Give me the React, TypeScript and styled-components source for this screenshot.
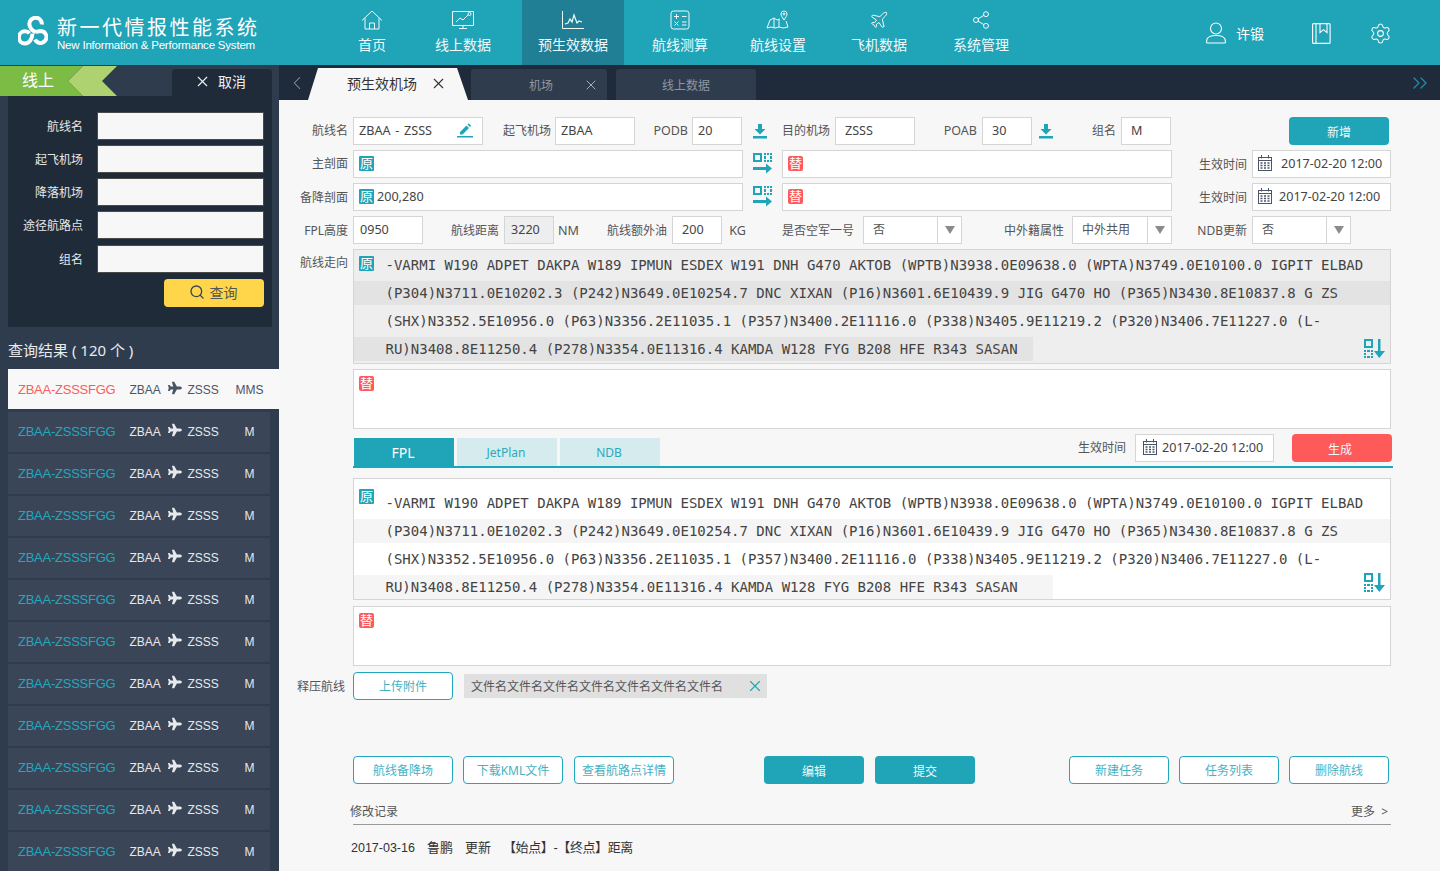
import styled, { createGlobalStyle } from "styled-components";
import { ChevronLeft, ChevronsRight, Plane, Search, Settings, Share2, X } from "lucide-react";
import { FaPlane } from "react-icons/fa";

const CJK = `"Noto Sans", "Noto Sans CJK SC", sans-serif`;
const ARIAL = `"Liberation Sans", "Noto Sans CJK SC", sans-serif`;
const MONO = `"DejaVu Sans Mono", monospace`;

const teal = "#1fa4b8";
const dark = "#202b39";
const slate = "#2f3c4e";
const red = "#ff5a5a";

const GlobalStyle = createGlobalStyle`
  html, body { margin: 0; padding: 0; height: 100%; overflow: hidden; }
  * { box-sizing: border-box; }
  body { font-family: ${CJK}; font-size: 12px; color: #444; background: #f7f7f7; }
`;

const Page = styled.div`
  width: 1440px;
  height: 871px;
  display: flex;
  flex-direction: column;
  overflow: hidden;
`;

/* top bar */
const Header = styled.header`
  height: 65px;
  flex: none;
  background: ${teal};
  display: flex;
  color: #fff;
`;

const Brand = styled.div`
  width: 340px;
  padding: 16px 0 0 18px;
  display: flex;
  gap: 9px;
`;

const BrandText = styled.div`
  display: flex;
  flex-direction: column;
`;

const BrandTitle = styled.div`
  font-family: ${ARIAL};
  font-size: 20px;
  line-height: 22px;
  margin-top: 0.5px;
  letter-spacing: 2.5px;
  white-space: nowrap;
`;

const BrandSub = styled.div`
  font-family: "Liberation Sans", sans-serif;
  font-size: 11.5px;
  line-height: 13px;
  letter-spacing: -0.2px;
  white-space: nowrap;
`;

const Nav = styled.nav`
  display: flex;
`;

const NavItem = styled.div<{ $w: number; $active?: boolean }>`
  width: ${(p) => p.$w}px;
  background: ${(p) => (p.$active ? "#207f95" : "transparent")};
  display: flex;
  flex-direction: column;
  align-items: center;
  padding-top: 10px;
  font-size: 14px;
  line-height: 20px;
  color: #f0fafb;
  svg { height: 20px; display: block; margin-bottom: 5px; }
`;

const UserArea = styled.div`
  margin-left: auto;
  margin-right: 48px;
  display: flex;
  align-items: center;
  font-size: 14px;
  padding-top: 1px;
`;

const UserName = styled.span`
  margin: 0 48px 0 10px;
`;

const GearSlot = styled.span`
  margin-left: 38px;
  display: flex;
`;

/* body */
const Body = styled.div`
  flex: 1;
  display: flex;
  min-height: 0;
`;

const Sidebar = styled.aside`
  width: 279px;
  flex: none;
  background: ${slate};
  overflow: hidden;
  padding-top: 1px;
`;

const SideHead = styled.div`
  height: 30px;
  display: flex;
`;

const GreenTag = styled.div`
  width: 83px;
  height: 30px;
  background: #7cbb44;
  color: #fff;
  font-size: 16px;
  line-height: 28px;
  padding-left: 22px;
  clip-path: polygon(0 0, 100% 0, 68px 50%, 100% 100%, 0 100%);
`;

const GreenArrow = styled.div`
  width: 49px;
  height: 30px;
  margin-left: -15px;
  background: #aed26f;
  clip-path: polygon(15px 0, 100% 0, 34px 50%, 100% 100%, 15px 100%, 0 50%);
`;

const CancelTab = styled.div`
  margin: 3px 7px 0 auto;
  width: 100px;
  background: ${dark};
  border-radius: 4px 4px 0 0;
  color: #eef1f3;
  font-size: 14px;
  display: flex;
  align-items: center;
  justify-content: flex-end;
  padding: 0 26px 3px 0;
  gap: 7px;
`;

const SearchPanel = styled.div`
  margin: 0 7px 0 8px;
  height: 231px;
  background: ${dark};
  padding-top: 16px;
  display: flex;
  flex-direction: column;
`;

const SearchRow = styled.label`
  display: flex;
  align-items: center;
  height: 28px;
  margin-bottom: 5px;
  color: #e4e7ea;
  font-size: 12px;
  &:nth-of-type(5) { margin-top: 1px; }
`;

const SearchLabel = styled.span`
  width: 75px;
  text-align: right;
  margin-right: 14px;
`;

const SearchInput = styled.input`
  width: 167px;
  height: 28px;
  border: 1px solid #4a4a48;
  background: #f7f7f7;
  border-radius: 0;
  padding: 0 6px;
`;

const QueryButton = styled.button`
  align-self: flex-end;
  margin: 1px 8px 0 0;
  width: 100px;
  height: 28px;
  border: none;
  border-radius: 4px;
  background: #ffd54a;
  color: #555;
  font: 14px ${CJK};
  display: flex;
  align-items: center;
  justify-content: center;
  gap: 5px;
  padding: 0 2px 3px 0;
`;

const ResultTitle = styled.div`
  height: 42px;
  padding: 13px 0 0 8px;
  color: #e8ebee;
  font-size: 15px;
  line-height: 20px;
`;

const ResultRow = styled.div<{ $active?: boolean }>`
  margin-left: 8px;
  width: ${(p) => (p.$active ? 271 : 262)}px;
  height: 40px;
  margin-bottom: ${(p) => (p.$active ? 3 : 2)}px;
  padding: 0 0 ${(p) => (p.$active ? 0 : 2)}px 10px;
  background: ${(p) => (p.$active ? "#f8f8f8" : "#3a4657")};
  color: ${(p) => (p.$active ? "#4a5566" : "#e6e9ec")};
  display: grid;
  grid-template-columns: 111px 39px 19px 40px 45px;
  align-items: center;
  font: 12px ${ARIAL};
`;

const RouteCode = styled.span<{ $active?: boolean }>`
  font-size: 13px;
  letter-spacing: -0.25px;
  color: ${(p) => (p.$active ? red : "#22a8bd")};
`;

const AirportCode = styled.span`
  padding-top: 1px;
  padding-left: 0.5px;
`;

const PlaneMark = styled.span`
  display: flex;
  padding-bottom: 2px;
`;

const GroupCode = styled.span`
  text-align: center;
  padding-top: 1px;
`;

/* tab strip */
const Content = styled.div`
  flex: 1;
  display: flex;
  flex-direction: column;
  min-width: 0;
`;

const TabStrip = styled.div`
  height: 35px;
  flex: none;
  background: #1f2b3a;
  display: flex;
  align-items: flex-end;
  color: #8d97a3;
`;

const StripBack = styled.div`
  width: 29px;
  height: 35px;
  display: flex;
  align-items: center;
  justify-content: center;
  padding-left: 7px;
  color: #8d97a3;
`;

const ActiveTab = styled.div`
  width: 160px;
  height: 32px;
  background: #f7f7f7;
  color: #333;
  font-size: 14px;
  display: flex;
  align-items: center;
  padding: 0 0 2px 39px;
  gap: 13px;
  clip-path: polygon(10px 0, 149px 0, 160px 100%, 0 100%);
`;

const StripTab = styled.div<{ $w: number; $ml: number; $shift?: number }>`
  width: ${(p) => p.$w}px;
  margin-left: ${(p) => p.$ml}px;
  height: 31px;
  background: ${slate};
  border-radius: 3px 3px 0 0;
  display: flex;
  align-items: center;
  justify-content: center;
  position: relative;
  font-size: 12px;
  padding: 1px 0 0 ${(p) => p.$shift ?? 0}px;
`;

const StripClose = styled.span`
  position: absolute;
  right: 8px;
  top: 8px;
  color: #aeb6bf;
  display: flex;
`;

const StripMore = styled.div`
  margin-left: auto;
  margin-right: 8px;
  height: 35px;
  display: flex;
  align-items: center;
  color: #1f8fa8;
`;

/* main form */
const Main = styled.main`
  flex: 1;
  background: #f7f7f7;
  padding-top: 17px;
  min-height: 0;
`;

const Row = styled.div<{ $mt?: number; $indent?: number }>`
  display: flex;
  align-items: center;
  height: 28px;
  margin-top: ${(p) => p.$mt ?? 5}px;
  padding-left: ${(p) => p.$indent ?? 0}px;
`;

const Label = styled.span<{ $w: number; $pr?: number; $up?: boolean; $fs?: number }>`
  width: ${(p) => p.$w}px;
  flex: none;
  text-align: right;
  margin-right: 4px;
  padding-right: ${(p) => p.$pr ?? 1}px;
  padding-bottom: ${(p) => (p.$up ? 2 : 0)}px;
  color: #555;
  white-space: nowrap;
  font-size: ${(p) => p.$fs ?? 12}px;
`;

const Field = styled.div<{ $w: number; $bg?: string; $pl?: number }>`
  width: ${(p) => p.$w}px;
  height: 28px;
  flex: none;
  border: 1px solid #d5d5d5;
  background: ${(p) => p.$bg ?? "#fff"};
  display: flex;
  align-items: center;
  padding: 0 5px 2px ${(p) => p.$pl ?? 5}px;
  font-size: 12.6px;
  color: #444;
  white-space: nowrap;
`;

const Unit = styled.span<{ $w: number }>`
  width: ${(p) => p.$w}px;
  padding-left: 4px;
  flex: none;
  font-size: 12.6px;
  color: #555;
`;

const IconSlot = styled.div<{ $w: number }>`
  width: ${(p) => p.$w}px;
  flex: none;
  display: flex;
  justify-content: center;
  align-items: center;
  color: ${teal};
`;

const Push = styled.span`
  margin-left: auto;
  display: flex;
`;

const WideText = styled.span`
  word-spacing: 1.5px;
`;

const DateText = styled.span<{ $ml: number }>`
  margin-left: ${(p) => p.$ml}px;
`;

const Select = styled.div<{ $w: number }>`
  width: ${(p) => p.$w}px;
  height: 28px;
  flex: none;
  border: 1px solid #d5d5d5;
  background: #fff;
  display: flex;
  align-items: center;
  font-size: 12px;
  color: #555;
`;

const SelectText = styled.span`
  flex: 1;
  padding: 0 0 3px 9px;
`;

const SelectArrow = styled.span`
  width: 24px;
  height: 100%;
  border-left: 1px solid #d5d5d5;
  display: flex;
  align-items: center;
  justify-content: center;
  &::after {
    content: "";
    border-left: 5.5px solid transparent;
    border-right: 5.5px solid transparent;
    border-top: 8px solid #8b8b8b;
  }
`;

const Badge = styled.span<{ $red?: boolean }>`
  width: 15px;
  height: 15px;
  flex: none;
  background: ${(p) => (p.$red ? red : teal)};
  border-radius: ${(p) => (p.$red ? 2 : 1)}px;
  color: #fff;
  font-size: 13px;
  line-height: 15px;
  text-align: center;
  display: inline-block;
`;

const BadgeGap = styled.span`
  margin-left: 3px;
`;

const BlockRow = styled.div<{ $mt?: number; $label?: boolean }>`
  display: flex;
  margin-top: ${(p) => p.$mt ?? 5}px;
  padding-left: ${(p) => (p.$label ? 0 : 74)}px;
`;

const TopLabel = styled(Label)`
  padding-top: 4px;
`;

const RouteBox = styled.div<{ $h: number; $bg: string; $pt: number }>`
  position: relative;
  width: 1038px;
  height: ${(p) => p.$h}px;
  background: ${(p) => p.$bg};
  border: 1px solid #d5d5d5;
  padding-top: ${(p) => p.$pt}px;
`;

const FloatBadge = styled.span<{ $top: number }>`
  position: absolute;
  left: 5px;
  top: ${(p) => p.$top}px;
  display: flex;
`;

const RouteLine = styled.div<{ $shade?: string; $w?: number }>`
  height: 28px;
  padding-left: 31.5px;
  width: ${(p) => (p.$w ? `${p.$w}px` : "100%")};
  background: ${(p) => (p.$shade ? `linear-gradient(transparent 2px, ${p.$shade} 2px, ${p.$shade} 26px, transparent 26px)` : "none")};
  font: 14px/28px ${MONO};
  color: #444;
  white-space: pre;
`;

const SortIcon = styled.span<{ $bottom: number }>`
  position: absolute;
  right: 5px;
  bottom: ${(p) => p.$bottom}px;
  display: flex;
  color: ${teal};
`;

const NoteBox = styled.div`
  position: relative;
  width: 1038px;
  height: 60px;
  background: #fff;
  border: 1px solid #d5d5d5;
`;

/* FPL tabs */
const TabsBar = styled.div`
  margin: 5px 47px 0 74px;
  height: 34px;
  display: flex;
  align-items: flex-start;
  border-bottom: 2px solid #17a8bd;
  padding-left: 1px;
`;

const FplTab = styled.div<{ $active?: boolean }>`
  width: 100px;
  height: 28px;
  margin: 4px 3px 0 0;
  background: ${(p) => (p.$active ? teal : "#d5ebee")};
  color: ${(p) => (p.$active ? "#fff" : "#2aa9bd")};
  font-size: ${(p) => (p.$active ? 14 : 12)}px;
  display: flex;
  align-items: center;
  justify-content: center;
  padding: 1px 2px 0 0;
`;

const TabsLabel = styled.span`
  margin-left: auto;
  margin-right: 9px;
  line-height: 28px;
  color: #555;
`;

const SolidButton = styled.button<{ $w?: number; $bg?: string; $ml?: number; $mr?: number; $pr?: number }>`
  width: ${(p) => p.$w ?? 100}px;
  height: 28px;
  flex: none;
  border: none;
  border-radius: 4px;
  background: ${(p) => p.$bg ?? teal};
  color: #eefafb;
  margin-left: ${(p) => p.$ml ?? 0}px;
  margin-right: ${(p) => p.$mr ?? 0}px;
  font: 12px ${CJK};
  padding: 2px ${(p) => p.$pr ?? 0}px 0 0;
`;

const OutlineButton = styled.button<{ $ml?: number }>`
  width: 100px;
  height: 28px;
  flex: none;
  border: 1px solid #1fa8bd;
  border-radius: 4px;
  background: #fff;
  color: #45b2c4;
  margin-left: ${(p) => p.$ml ?? 0}px;
  font: 12px ${CJK};
  padding: 0;
  white-space: nowrap;
`;

const FileChip = styled.div`
  width: 303px;
  height: 24px;
  margin-left: 11px;
  background: #e0e0e0;
  display: flex;
  align-items: center;
  justify-content: space-between;
  padding: 0 3px 0 7px;
  color: #555;
  font-size: 12px;
`;

const ChipClose = styled.span`
  color: #1fa8a8;
  display: flex;
`;

const HistoryHead = styled.div`
  margin: 17px 49px 0 71px;
  height: 23px;
  padding-top: 1px;
  display: flex;
  justify-content: space-between;
  color: #555;
  font-size: 12px;
  line-height: 20px;
`;

const HistoryMore = styled.span`
  padding-right: 3px;
  word-spacing: 3px;
`;

const HistoryRule = styled.div`
  margin: 0 49px 0 74px;
  height: 1px;
  background: #999;
`;

const HistoryRecord = styled.div`
  margin: 13px 0 0 72px;
  display: flex;
  gap: 12px;
  font: 13px/20px ${ARIAL};
  color: #333;
`;

const RecordDate = styled.span`
  font-size: 12.5px;
`;

const RecordDetail = styled.span`
  letter-spacing: -0.4px;
`;

/* drawn icons */
const Logo = () => (
  <svg width="30" height="30" viewBox="0 0 30 30" fill="none" stroke="#fff" strokeWidth="4">
    <path d="M23.800 8.500A6.200 6.200 0 1 0 12 10.500c.7 2.500 3 4.500 6 5.500" />
    <path d="M18 16c2-.6 3.500-1 5-1a6 6 0 1 1-6 8.500" />
    <path d="M14.500 17.500c-.3 5-3 10-7.500 10a6 6 0 0 1 0-12.200c2 0 3.500.8 4.500 2" />
  </svg>
);

const HomeIcon = () => (
  <svg width="22" height="20" viewBox="0 0 22 20" fill="none" stroke="currentColor" strokeWidth="1">
    <path d="M1 10.500 11 1l10 9.500M4 8v11h14V8M8.500 19v-6h5v6" />
  </svg>
);

const ScreenIcon = () => (
  <svg width="24" height="20" viewBox="0 0 24 20" fill="none" stroke="currentColor" strokeWidth="1">
    <path d="M1.500 1.500h21v14h-21zM8 18.500h8M12 15.500v3" />
    <path d="M5 12l4-4 3 2 5-5" />
    <circle cx="18.500" cy="4" r="1.500" />
  </svg>
);

const WaveIcon = () => (
  <svg width="24" height="20" viewBox="0 0 24 20" fill="none" stroke="currentColor" strokeWidth="1">
    <path d="M1.500 1v17.500H23" />
    <path d="M4 14l3-1 2-4 2 3 2-7 3 8 2-2 3 1" strokeWidth="1.200" />
  </svg>
);

const CalcIcon = () => (
  <svg width="20" height="20" viewBox="0 0 20 20" fill="none" stroke="currentColor" strokeWidth="1">
    <rect x="1" y="1" width="18" height="18" rx="2.500" />
    <path d="M4 6.500h5M6.500 4v5M12 6.500h4.500M4.500 11.500l4 4M8.500 11.500l-4 4M12 12h4.500M12 15h4.500" />
  </svg>
);

const MapIcon = () => (
  <svg width="24" height="20" viewBox="0 0 24 20" fill="none" stroke="currentColor" strokeWidth="1">
    <path d="M1 18l3-8 4-2 3 2 3-1M1 18l4-1 4 1 4-1 4 1 5-1-2-6" />
    <path d="M8 8v10M13 10v7" />
    <path d="M18 10c-2-3-3-4.500-3-6a3 3 0 0 1 6 0c0 1.500-1 3-3 6z" />
    <circle cx="18" cy="4" r="1" />
  </svg>
);

const UserIcon = () => (
  <svg width="20" height="22" viewBox="0 0 20 22" fill="none" stroke="currentColor" strokeWidth="1.100">
    <circle cx="10" cy="6.500" r="5.500" />
    <path d="M1.500 21c-.8 0-1-.6-1-1.500 0-3.500 3-6 9.500-6s9.500 2.500 9.500 6c0 .9-.2 1.500-1 1.500z" />
  </svg>
);

const BookIcon = () => (
  <svg width="19" height="21" viewBox="0 0 19 21" fill="none" stroke="currentColor" strokeWidth="1.100">
    <rect x=".6" y=".6" width="17.500" height="19.800" rx="1" />
    <path d="M4 .6v19.800M8 .6v9l3.500-3 3.500 3v-9" />
  </svg>
);

const DownloadIcon = () => (
  <svg width="14" height="15" viewBox="0 0 14 15" fill="currentColor">
    <path d="M5 0h4v5h3.500L7 10.500 1.500 5H5zM0 12h14v2.500H0z" />
  </svg>
);

const PencilIcon = () => (
  <svg width="16" height="15" viewBox="0 0 16 15" fill="currentColor">
    <path d="M3 9l6.500-6.500 2.500 2.500L5.500 11.500H3zM10.500 1.500l1.200-1.200 2.500 2.500L13 4z" />
    <path d="M0 13h16v1.500H0z" />
  </svg>
);

const QrArrowIcon = () => (
  <svg width="20" height="22" viewBox="0 0 20 22" fill="currentColor">
    <path fillRule="evenodd" d="M0 0h9v9H0zM2 2v5h5V2z" />
    <path d="M11 0h2v2h-2zM14 0h2v2h-2zM17 0h2v2h-2zM11 3h2v3h-2zM17 3h2v3h-2zM11 7h2v2h-2zM14 7h2v2h-2zM17 7h2v2h-2z" />
    <path d="M0 14h13v-3.500l6 5-6 5V17H0z" />
  </svg>
);

const QrDownIcon = () => (
  <svg width="21" height="19" viewBox="0 0 21 19" fill="currentColor">
    <path fillRule="evenodd" d="M0 0h9v9H0zM2 2v5h5V2z" />
    <path d="M0 11h2v2H0zM3 11h3v2H3zM7 11h2v2H7zM0 14h2v2H0zM7 14h2v2H7zM0 17h2v2H0zM3 17h3v2H3zM7 17h2v2H7z" />
    <path d="M14 0h2.500v12H21l-5.700 7L10 12h4z" />
  </svg>
);

const CalendarIcon = () => (
  <svg width="14" height="16" viewBox="0 0 14 16" fill="none" stroke="#4a5566" strokeWidth="1">
    <rect x=".5" y="2.500" width="13" height="13" />
    <path d="M.5 5.500h13M3.500 0v3.500M10.500 0v3.500" />
    <path d="M2.500 8h2M6 8h2M9.500 8h2M2.500 10.500h2M6 10.500h2M9.500 10.500h2M2.500 13h2M6 13h2M9.500 13h2" strokeWidth="1.400" />
  </svg>
);

const navItems = [
  { label: "首页", w: 64, icon: <HomeIcon /> },
  { label: "线上数据", w: 118, icon: <ScreenIcon /> },
  { label: "预生效数据", w: 102, icon: <WaveIcon />, active: true },
  { label: "航线测算", w: 112, icon: <CalcIcon /> },
  { label: "航线设置", w: 84, icon: <MapIcon /> },
  { label: "飞机数据", w: 118, icon: <Plane size={20} strokeWidth={1.2} /> },
  { label: "系统管理", w: 86, icon: <Share2 size={20} strokeWidth={1.2} /> },
];

const searchFields = ["航线名", "起飞机场", "降落机场", "途径航路点", "组名"];

const results = [
  { group: "MMS", active: true },
  ...Array.from({ length: 11 }, () => ({ group: "M", active: false })),
];

const routeLines = [
  "-VARMI W190 ADPET DAKPA W189 IPMUN ESDEX W191 DNH G470 AKTOB (WPTB)N3938.0E09638.0 (WPTA)N3749.0E10100.0 IGPIT ELBAD",
  "(P304)N3711.0E10202.3 (P242)N3649.0E10254.7 DNC XIXAN (P16)N3601.6E10439.9 JIG G470 HO (P365)N3430.8E10837.8 G ZS",
  "(SHX)N3352.5E10956.0 (P63)N3356.2E11035.1 (P357)N3400.2E11116.0 (P338)N3405.9E11219.2 (P320)N3406.7E11227.0 (L-",
  "RU)N3408.8E11250.4 (P278)N3354.0E11316.4 KAMDA W128 FYG B208 HFE R343 SASAN",
];

const RouteText = ({ shade, lastWidth }: { shade: string; lastWidth: number }) => (
  <>
    {routeLines.map((line, i) => (
      <RouteLine
        key={line}
        $shade={i % 2 === 1 ? shade : undefined}
        $w={i === 3 ? lastWidth : undefined}
      >
        {line}
      </RouteLine>
    ))}
  </>
);

export default function App() {
  return (
    <Page>
      <GlobalStyle />
      <Header>
        <Brand>
          <Logo />
          <BrandText>
            <BrandTitle>新一代情报性能系统</BrandTitle>
            <BrandSub>New Information &amp; Performance System</BrandSub>
          </BrandText>
        </Brand>
        <Nav>
          {navItems.map((item) => (
            <NavItem key={item.label} $w={item.w} $active={item.active}>
              {item.icon}
              {item.label}
            </NavItem>
          ))}
        </Nav>
        <UserArea>
          <UserIcon />
          <UserName>许锻</UserName>
          <BookIcon />
          <GearSlot>
            <Settings size={23} strokeWidth={1.1} />
          </GearSlot>
        </UserArea>
      </Header>

      <Body>
        <Sidebar>
          <SideHead>
            <GreenTag>线上</GreenTag>
            <GreenArrow />
            <CancelTab>
              <X size={17} strokeWidth={1.5} />
              取消
            </CancelTab>
          </SideHead>
          <SearchPanel>
            {searchFields.map((name) => (
              <SearchRow key={name}>
                <SearchLabel>{name}</SearchLabel>
                <SearchInput />
              </SearchRow>
            ))}
            <QueryButton>
              <Search size={16} strokeWidth={2} color="#3c4654" />
              查询
            </QueryButton>
          </SearchPanel>
          <ResultTitle>查询结果 ( 120 个 )</ResultTitle>
          {results.map((r, i) => (
            <ResultRow key={i} $active={r.active}>
              <RouteCode $active={r.active}>ZBAA-ZSSSFGG</RouteCode>
              <AirportCode>ZBAA</AirportCode>
              <PlaneMark><FaPlane size={14} /></PlaneMark>
              <AirportCode>ZSSS</AirportCode>
              <GroupCode>{r.group}</GroupCode>
            </ResultRow>
          ))}
        </Sidebar>

        <Content>
          <TabStrip>
            <StripBack>
              <ChevronLeft size={26} strokeWidth={1.1} />
            </StripBack>
            <ActiveTab>
              预生效机场
              <X size={17} strokeWidth={1.5} />
            </ActiveTab>
            <StripTab $w={136} $ml={3} $shift={4}>
              机场
              <StripClose>
                <X size={16} strokeWidth={1.4} />
              </StripClose>
            </StripTab>
            <StripTab $w={140} $ml={9}>线上数据</StripTab>
            <StripMore>
              <ChevronsRight size={24} strokeWidth={1.3} />
            </StripMore>
          </TabStrip>

          <Main>
            <Row $mt={0}>
              <Label $w={70} $up>航线名</Label>
              <Field $w={130}>
                <WideText>ZBAA - ZSSS</WideText>
                <Push>
                  <IconSlot $w={24}><PencilIcon /></IconSlot>
                </Push>
              </Field>
              <Label $w={68} $pr={0} $up>起飞机场</Label>
              <Field $w={80}>ZBAA</Field>
              <Label $w={53} $pr={0} $up $fs={12.5}>PODB</Label>
              <Field $w={50}>20</Field>
              <IconSlot $w={36}><DownloadIcon /></IconSlot>
              <Label $w={53} $up>目的机场</Label>
              <Field $w={80} $pl={9}>ZSSS</Field>
              <Label $w={63} $pr={1} $up $fs={12.5}>POAB</Label>
              <Field $w={50} $pl={9}>30</Field>
              <IconSlot $w={28}><DownloadIcon /></IconSlot>
              <Label $w={57} $up>组名</Label>
              <Field $w={50} $pl={9}>M</Field>
              <SolidButton $ml={118}>新增</SolidButton>
            </Row>
            <Row>
              <Label $w={70} $up>主剖面</Label>
              <Field $w={390}><Badge>原</Badge></Field>
              <IconSlot $w={39}><QrArrowIcon /></IconSlot>
              <Field $w={390}><Badge $red>替</Badge></Field>
              <Label $w={76}>生效时间</Label>
              <Field $w={139}>
                <CalendarIcon />
                <DateText $ml={9}>2017-02-20 12:00</DateText>
              </Field>
            </Row>
            <Row>
              <Label $w={70}>备降剖面</Label>
              <Field $w={390}><Badge>原</Badge><BadgeGap>200,280</BadgeGap></Field>
              <IconSlot $w={39}><QrArrowIcon /></IconSlot>
              <Field $w={390}><Badge $red>替</Badge></Field>
              <Label $w={76}>生效时间</Label>
              <Field $w={139}>
                <CalendarIcon />
                <DateText $ml={7}>2017-02-20 12:00</DateText>
              </Field>
            </Row>
            <Row>
              <Label $w={70}>FPL高度</Label>
              <Field $w={70} $pl={6}>0950</Field>
              <Label $w={77}>航线距离</Label>
              <Field $w={50} $bg="#eeeeee" $pl={6}>3220</Field>
              <Unit $w={46}>NM</Unit>
              <Label $w={68}>航线额外油</Label>
              <Field $w={50} $pl={9}>200</Field>
              <Unit $w={48}>&nbsp;KG</Unit>
              <Label $w={89} $pr={5}>是否空军一号</Label>
              <Select $w={99}><SelectText>否</SelectText><SelectArrow /></Select>
              <Label $w={106} $pr={4}>中外籍属性</Label>
              <Select $w={100}><SelectText>中外共用</SelectText><SelectArrow /></Select>
              <Label $w={76}>NDB更新</Label>
              <Select $w={99}><SelectText>否</SelectText><SelectArrow /></Select>
            </Row>

            <BlockRow $label>
              <TopLabel $w={70}>航线走向</TopLabel>
              <RouteBox $h={115} $bg="#eeeeee" $pt={1}>
                <FloatBadge $top={6}><Badge>原</Badge></FloatBadge>
                <RouteText shade="#e3e3e3" lastWidth={679} />
                <SortIcon $bottom={5}><QrDownIcon /></SortIcon>
              </RouteBox>
            </BlockRow>
            <BlockRow>
              <NoteBox>
                <FloatBadge $top={6}><Badge $red>替</Badge></FloatBadge>
              </NoteBox>
            </BlockRow>

            <TabsBar>
              <FplTab $active>FPL</FplTab>
              <FplTab>JetPlan</FplTab>
              <FplTab>NDB</FplTab>
              <TabsLabel>生效时间</TabsLabel>
              <Field $w={139} $pl={7}>
                <CalendarIcon />
                <DateText $ml={5}>2017-02-20 12:00</DateText>
              </Field>
              <SolidButton $bg={red} $ml={18} $mr={1} $pr={4}>生成</SolidButton>
            </TabsBar>

            <BlockRow $mt={10}>
              <RouteBox $h={122} $bg="#fff" $pt={10}>
                <FloatBadge $top={10}><Badge>原</Badge></FloatBadge>
                <RouteText shade="#f5f5f5" lastWidth={699} />
                <SortIcon $bottom={7}><QrDownIcon /></SortIcon>
              </RouteBox>
            </BlockRow>
            <BlockRow $mt={6}>
              <NoteBox>
                <FloatBadge $top={6}><Badge $red>替</Badge></FloatBadge>
              </NoteBox>
            </BlockRow>

            <Row $mt={6}>
              <Label $w={70} $pr={4}>释压航线</Label>
              <OutlineButton>上传附件</OutlineButton>
              <FileChip>
                文件名文件名文件名文件名文件名文件名文件名
                <ChipClose><X size={18} strokeWidth={1.5} /></ChipClose>
              </FileChip>
            </Row>

            <Row $mt={56} $indent={74}>
              <OutlineButton>航线备降场</OutlineButton>
              <OutlineButton $ml={10}>下载KML文件</OutlineButton>
              <OutlineButton $ml={11}>查看航路点详情</OutlineButton>
              <SolidButton $ml={90}>编辑</SolidButton>
              <SolidButton $ml={11}>提交</SolidButton>
              <OutlineButton $ml={94}>新建任务</OutlineButton>
              <OutlineButton $ml={10}>任务列表</OutlineButton>
              <OutlineButton $ml={10}>删除航线</OutlineButton>
            </Row>

            <HistoryHead>
              <span>修改记录</span>
              <HistoryMore>更多 &gt;</HistoryMore>
            </HistoryHead>
            <HistoryRule />
            <HistoryRecord>
              <RecordDate>2017-03-16</RecordDate>
              <span>鲁鹏</span>
              <span>更新</span>
              <RecordDetail>【始点】-【终点】距离</RecordDetail>
            </HistoryRecord>
          </Main>
        </Content>
      </Body>
    </Page>
  );
}
